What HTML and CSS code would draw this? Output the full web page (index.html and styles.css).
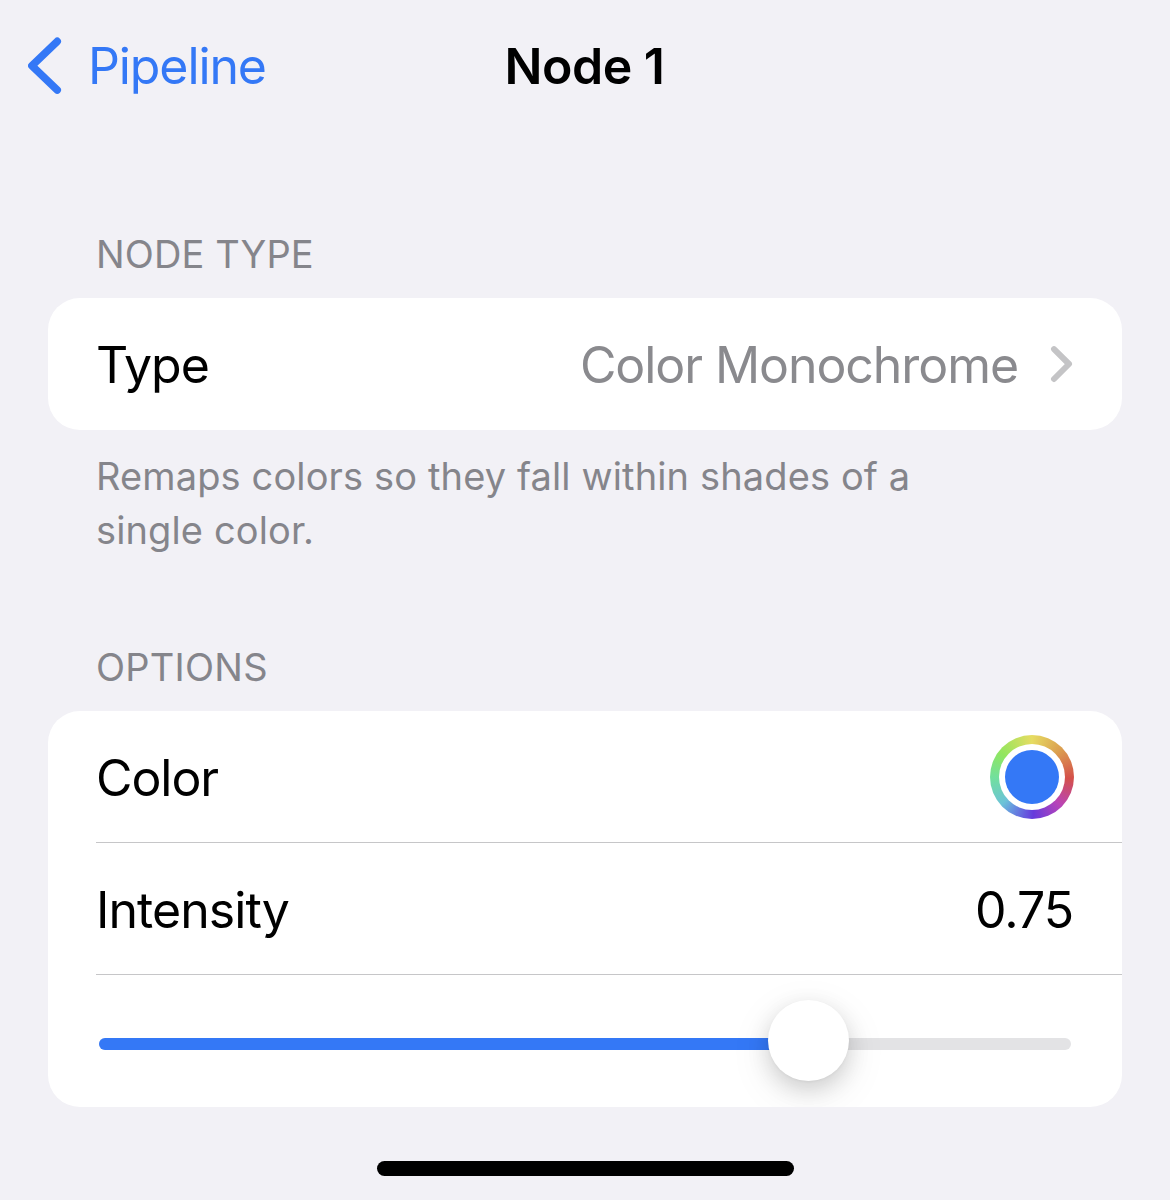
FILE: index.html
```html
<!DOCTYPE html>
<html lang="en">
<head>
<meta charset="utf-8">
<title>Node 1</title>
<link rel="stylesheet" href="styles.css">
</head>
<body>
<header class="navbar">
  <a class="back"><svg class="back-icon" width="34" height="58" viewBox="0 0 34 58"><path d="M29.2 4.4 3.9 28.7 29.2 53"/></svg><span class="back-label">Pipeline</span></a>
  <h1 class="title">Node 1</h1>
</header>
<main class="form">
  <h2 class="section-title">NODE TYPE</h2>
  <section class="card">
    <div class="row">
      <span class="label">Type</span>
      <span class="value">Color Monochrome</span>
      <svg class="chevron" width="24" height="38" viewBox="0 0 24 38"><path d="M4 4.1 19 19 4 34"/></svg>
    </div>
  </section>
  <p class="note">Remaps colors so they fall within shades of a<br>single color.</p>
  <h2 class="section-title options-title">OPTIONS</h2>
  <section class="card">
    <div class="row divided"><span class="label">Color</span><span class="well"><span class="well-gap"><span class="swatch"></span></span></span></div>
    <div class="row divided"><span class="label intensity">Intensity</span><span class="number">0.75</span></div>
    <div class="row"><div class="slider"><div class="fill"></div><div class="thumb"></div></div></div>
  </section>
</main>
<div class="home-indicator"></div>
</body>
</html>
```
FILE: styles.css
```css
* { box-sizing: border-box; }
body {
  margin: 0;
  width: 1170px;
  height: 1200px;
  overflow: hidden;
  background: #f2f1f6;
  color: #000;
  font-family: Inter, sans-serif;
  font-size: 50px;
}
h1, h2, p { margin: 0; white-space: nowrap; }
.navbar {
  height: 132px;
  display: grid;
  grid-template-columns: 1fr auto 1fr;
  align-items: center;
  padding: 0 29px 0 28px;
}
.back { display: flex; align-items: center; gap: 26px; color: #3478f6; letter-spacing: -1.1px; }
.back-icon path { fill: none; stroke: #3478f6; stroke-width: 7.6; stroke-linecap: round; stroke-linejoin: round; }
.title { font-size: 50px; font-weight: 600; letter-spacing: -0.5px; }
.form { padding: 0 48px; }
.section-title {
  height: 166px;
  padding: 94px 48px 0;
  font-size: 38px;
  line-height: 56px;
  font-weight: 400;
  letter-spacing: 0.1px;
  color: #85858b;
}
.card { background: #fff; border-radius: 32px; overflow: hidden; }
.row {
  height: 132px;
  margin-left: 48px;
  padding-right: 48px;
  display: flex;
  align-items: center;
}
.label, .value, .number { padding-top: 2px; letter-spacing: -1.07px; }
.label { margin-right: auto; }
.intensity { letter-spacing: -0.95px; }
.value { color: #8a8a8e; margin-right: 32px; }
.number { margin-right: 1px; }
.chevron path { fill: none; stroke: #c4c4c6; stroke-width: 6; stroke-linecap: round; stroke-linejoin: round; }
.note { padding: 19px 48px 0; height: 128px; font-size: 38px; line-height: 54px; letter-spacing: 0.13px; color: #85858b; }
.options-title { height: 153px; padding-top: 81px; letter-spacing: 0.25px; }
.divided { box-shadow: inset 0 -1px #c6c6c8; }
.well {
  width: 84px;
  height: 84px;
  padding: 9px;
  border-radius: 50%;
  background: conic-gradient(#e6dc62, #dba050 45deg, #d4504a 92deg, #b944b8 135deg, #663bdc 178deg, #668fe0 210deg, #6cc3d8 228deg, #72e09c 270deg, #91e65e 308deg, #e6dc62);
}
.well-gap { display: block; padding: 6px; width: 66px; height: 66px; border-radius: 50%; background: #fff; }
.swatch { display: block; width: 54px; height: 54px; border-radius: 50%; background: #3478f6; }
.slider {
  position: relative;
  width: 972px;
  height: 12px;
  margin: 6px 0 0 3px;
  border-radius: 6px;
  background: #e3e3e5;
}
.fill { width: 710px; height: 12px; border-radius: 6px; background: #3478f6; }
.thumb {
  position: absolute;
  left: 669px;
  top: -38px;
  width: 81px;
  height: 81px;
  border-radius: 50%;
  background: #fff;
  box-shadow: 0 1px 3px rgba(0,0,0,.04), 0 8px 22px rgba(0,0,0,.14), 0 12px 44px rgba(0,0,0,.09);
}
.home-indicator { width: 417px; height: 15px; margin: 54px auto 0; border-radius: 8px; background: #000; }
```
